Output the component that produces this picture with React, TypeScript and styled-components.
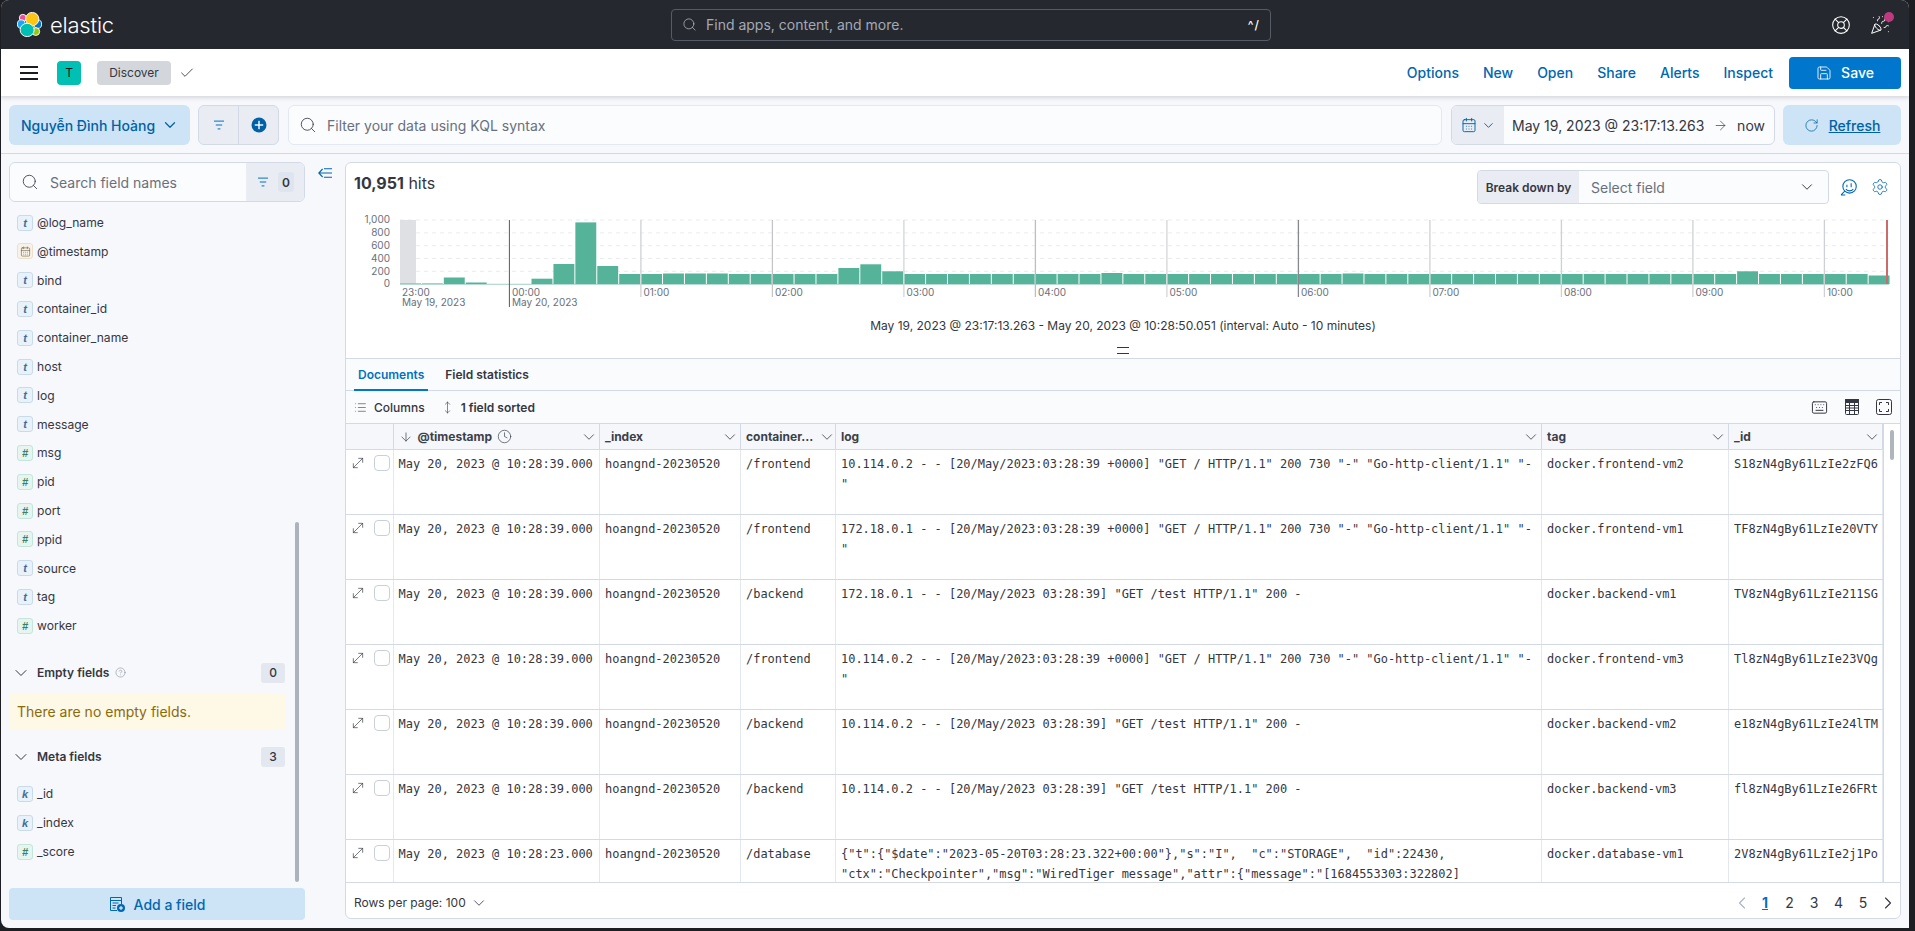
import React from "react";
import styled, { createGlobalStyle } from "styled-components";
import {
  ArrowDown, ArrowRight, CalendarDays, Check, ChevronDown, ChevronLeft, ChevronRight,
  CircleHelp, Clock, Keyboard, LifeBuoy, List, MoveDiagonal, MoveVertical, PartyPopper, RotateCw, Save, Search, Settings,
} from "lucide-react";

const Global = createGlobalStyle`
  html, body { margin: 0; padding: 0; background: #1d1e24; overflow: hidden; }
  body { font-family: Inter, "Noto Sans", sans-serif; font-size: 14px; color: #343741; }
  * { box-sizing: border-box; }
`;

const Page = styled.div`
  margin-left: 1px; width: 1908px; height: 928px; display: flex; flex-direction: column;
  background: #f7f8fc; border-radius: 8px 8px 0 8px; overflow: hidden;
`;
const TopBar = styled.header`
  height: 49px; flex: none; background: #25282f; display: flex; align-items: center;
`;
const Brand = styled.div`
  width: 670px; flex: none; display: flex; align-items: center; gap: 8px; padding-left: 16px;
`;
const BrandName = styled.span`
  color: #fff; font-size: 22px; font-weight: 300; letter-spacing: -0.2px; line-height: 30px;
`;
const GlobalSearch = styled.div`
  width: 600px; height: 32px; flex: none; display: flex; align-items: center; gap: 9px;
  padding: 0 10px; border: 1px solid #565b66; border-radius: 4px; color: #a3a9b5; font-size: 14px;
`;
const ShortcutKey = styled.span`
  margin-left: auto; color: #fff; font-size: 12px; font-weight: 500; letter-spacing: 1px;
`;
const TopIcons = styled.div`
  flex: 1; display: flex; justify-content: flex-end; align-items: center; gap: 19px; padding-right: 19px; color: #fff;
`;
const NewsIcon = styled.span`
  position: relative; display: flex;
`;
const NewsDot = styled.span`
  position: absolute; top: -3px; right: -4px; width: 10px; height: 10px; border-radius: 50%; background: #bd3a7e;
`;
const AppBar = styled.nav`
  height: 47px; flex: none; background: #fff; display: flex; align-items: center; padding: 0 8px 0 19px;
  box-shadow: 0 2px 4px rgba(60, 70, 90, 0.18); position: relative;
`;
const Burger = styled.svg`
  width: 18px; height: 14px; flex: none; margin-right: 19px;
`;
const Avatar = styled.span`
  width: 24px; height: 24px; border-radius: 4px; background: #00bfb3; color: #111; font-size: 12px;
  display: flex; align-items: center; justify-content: center; margin-right: 16px;
`;
const Crumb = styled.span`
  width: 74px; height: 24px; border-radius: 4px; background: #d3d6da; color: #343741; font-size: 12px;
  display: flex; align-items: center; justify-content: center; margin-right: 8px;
`;
const AppLinks = styled.div`
  margin-left: auto; display: flex; align-items: center; gap: 24px;
`;
const AppLink = styled.a`
  color: #0067b0; font-size: 14px; font-weight: 500;
`;
const SaveButton = styled.button`
  width: 112px; height: 32px; margin-left: -8px; border: 0; border-radius: 4px; background: #0077cc; color: #fff;
  font: 500 14px Inter, sans-serif; display: flex; align-items: center; justify-content: center; gap: 9px;
`;
const QueryBar = styled.div`
  height: 58px; flex: none; padding: 9px 8px 8px; display: flex; gap: 8px; border-bottom: 1px solid #d3dae6;
`;
const DataViewButton = styled.button`
  width: 181px; height: 40px; flex: none; border: 0; border-radius: 6px; background: #cce4f5; color: #0061a6;
  font: 500 14px Inter, sans-serif; display: flex; align-items: center; justify-content: space-between; padding: 0 11px 0 12px;
`;
const FilterGroup = styled.div`
  width: 81px; height: 40px; flex: none; display: flex; border: 1px solid #d3dae6; border-radius: 6px; background: #e9edf3; overflow: hidden;
`;
const FilterCell = styled.span`
  flex: 1; display: flex; align-items: center; justify-content: center;
  & + & { border-left: 1px solid #d3dae6; }
`;
const KqlInput = styled.div`
  flex: 1; height: 40px; margin: 0 1px; display: flex; align-items: center; gap: 10px; padding: 0 10px; background: #fbfcfd;
  border: 1px solid #e4e8f0; border-radius: 6px; color: #69707d; font-size: 14px;
`;
const DateGroup = styled.div`
  width: 324px; height: 40px; flex: none; display: flex; border: 1px solid #d3dae6; border-radius: 6px; background: #fbfcfd; overflow: hidden;
`;
const DatePrepend = styled.span`
  width: 52px; flex: none; background: #e9edf3; color: #0061a6; display: flex; align-items: center; justify-content: center; gap: 4px;
`;
const DateText = styled.span`
  flex: 1; display: flex; align-items: center; justify-content: space-between; padding: 0 9px 0 8px; font-size: 14px; color: #343741;
`;
const RefreshButton = styled.button`
  width: 118px; height: 40px; flex: none; border: 0; border-radius: 6px; background: #cce4f5; color: #0061a6;
  font: 500 14px Inter, sans-serif; display: flex; align-items: center; justify-content: center; gap: 10px;
`;
const RefreshLabel = styled.span`
  text-decoration: underline;
`;
const Content = styled.main`
  flex: 1; min-height: 0; display: flex; padding: 8px;
`;
const Sidebar = styled.aside`
  width: 296px; flex: none; display: flex; flex-direction: column; position: relative;
`;
const FieldSearch = styled.div`
  height: 40px; flex: none; display: flex; align-items: center; border: 1px solid #d3dae6; border-radius: 6px; background: #fbfcfd; overflow: hidden;
`;
const FieldSearchInput = styled.div`
  flex: 1; display: flex; align-items: center; gap: 11px; padding-left: 11px; color: #69707d; font-size: 14px;
`;
const FieldFilter = styled.div`
  width: 58px; height: 100%; background: #e9edf3; display: flex; align-items: center; gap: 9px; padding-left: 11px;
`;
const ZeroBadge = styled.span`
  width: 16px; height: 20px; border-radius: 3px; background: #dfe5ef; font-size: 12px; font-weight: 600; display: flex; align-items: center; justify-content: center;
`;
const FieldList = styled.ul<{ $top: number }>`
  list-style: none; margin: 0; padding: ${(p) => p.$top}px 0 0 8px; width: 276px;
`;
const FieldItem = styled.li`
  height: 28.8px; display: flex; align-items: center; gap: 4px; font-size: 12.1px; color: #343741;
`;
const tokenColors = {
  t: { bg: "#eaf2f9", border: "#c7dbec", color: "#3f6e97" },
  k: { bg: "#eaf2f9", border: "#c7dbec", color: "#3f6e97" },
  "#": { bg: "#e6f5f0", border: "#c3e6da", color: "#39806b" },
  d: { bg: "#f8f3ea", border: "#ebe0cc", color: "#6a5c3d" },
};
const Token = styled.span<{ $kind: keyof typeof tokenColors }>`
  width: 16px; height: 16px; flex: none; border-radius: 3px; display: flex; align-items: center; justify-content: center;
  background: ${(p) => tokenColors[p.$kind].bg}; border: 1px solid ${(p) => tokenColors[p.$kind].border};
  color: ${(p) => tokenColors[p.$kind].color}; font: italic 700 11px "Liberation Sans", sans-serif;
`;
const SectionHead = styled.div<{ $gap: number }>`
  height: 24px; margin-top: ${(p) => p.$gap}px; width: 276px; display: flex; align-items: center; padding-left: 2px; font-size: 12px; font-weight: 600; color: #343741;
`;
const SectionTitle = styled.span`
  margin-left: 6px; margin-right: 6px;
`;
const CountBadge = styled.span`
  margin-left: auto; width: 24px; height: 20px; border-radius: 3px; background: #e3e8f0; font-size: 12px; font-weight: 500;
  display: flex; align-items: center; justify-content: center;
`;
const Callout = styled.div`
  width: 276px; height: 36px; margin-top: 9px; padding: 0 8px; display: flex; align-items: center; background: #fef8e6; color: #8a6a0a; font-size: 14px;
`;
const AddField = styled.button`
  margin-top: auto; height: 32px; flex: none; border: 0; border-radius: 4px; background: #cce4f5; color: #0067b0;
  font: 500 14px Inter, sans-serif; display: flex; align-items: center; justify-content: center; gap: 9px;
`;
const SideScroll = styled.span`
  position: absolute; left: 286px; top: 360px; width: 4px; height: 360px; border-radius: 2px; background: #aeb3bb;
`;
const Gutter = styled.div`
  width: 40px; flex: none; padding: 6px 0 0 13px; line-height: 0;
`;
const Panel = styled.section`
  flex: 1; min-width: 0; display: flex; flex-direction: column; background: #fff; border: 1px solid #d3dae6; border-radius: 6px; overflow: hidden; margin-bottom: 1px;
`;
const HitsRow = styled.div`
  height: 47px; flex: none; display: flex; align-items: flex-start; padding: 7px 11px 0 8px;
`;
const Hits = styled.div`
  font-size: 16px; line-height: 24px; color: #343741; margin-top: 1px;
  & b { font-weight: 700; }
`;
const BreakDown = styled.div`
  margin-left: auto; width: 352px; height: 34px; display: flex; border: 1px solid #d3dae6; border-radius: 4px; overflow: hidden; background: #fbfcfd;
`;
const BreakLabel = styled.span`
  width: 101px; flex: none; background: #e9edf3; font-size: 12px; font-weight: 600; display: flex; align-items: center; justify-content: center;
`;
const BreakSelect = styled.span`
  flex: 1; display: flex; align-items: center; justify-content: space-between; padding: 0 12px 0 12px; color: #69707d; font-size: 14px;
`;
const ChartIcons = styled.div`
  display: flex; gap: 14px; align-items: center; height: 34px; margin-left: 11px; color: #0067b0;
`;
const ChartSvg = styled.svg`
  display: block; width: 1554px; height: 100px; flex: none;
`;
const RangeText = styled.div`
  margin-top: 8px; height: 16px; line-height: 16px; flex: none; text-align: center; font-size: 12px; color: #343741;
`;
const Handle = styled.div`
  height: 24px; flex: none; padding-top: 13px; display: flex; justify-content: center;
  &::before { content: ""; width: 12px; height: 5px; border-top: 1.5px solid #343741; border-bottom: 1.5px solid #343741; }
`;
const Tabs = styled.div`
  height: 33px; flex: none; display: flex; gap: 13px; padding-left: 8px; background: #fafbfd; border-top: 1px solid #d3dae6; border-bottom: 1px solid #d3dae6;
`;
const Tab = styled.span<{ $active?: boolean }>`
  padding: 1px 4px 0; height: 32px; display: flex; align-items: center; font-size: 12px; font-weight: 600;
  color: ${(p) => (p.$active ? "#0071c2" : "#343741")};
  border-bottom: 2px solid ${(p) => (p.$active ? "#0077cc" : "transparent")};
`;
const GridBar = styled.div`
  height: 32px; flex: none; display: flex; align-items: center; padding: 0 8px; background: #fafbfd; font-size: 12px; gap: 7px;
`;
const GridBarLabel = styled.span<{ $bold?: boolean }>`
  font-weight: ${(p) => (p.$bold ? 600 : 500)}; margin-right: 9px;
`;
const GridIcons = styled.div`
  margin-left: auto; display: flex; gap: 16px; align-items: center;
`;
const TableWrap = styled.div`
  flex: 1; min-height: 0; overflow: hidden; display: flex; flex-direction: column; position: relative; border-top: 1px solid #d3dae6;
`;
const COLS = "47.5px 206.5px 141px 95px 706px 187px 154px";
const HeadRow = styled.div`
  height: 26px; flex: none; display: grid; grid-template-columns: ${COLS}; width: 1537px; background: #f5f7fa; border-bottom: 1px solid #d3dae6;
`;
const HeadCell = styled.div`
  display: flex; align-items: center; gap: 5px; padding: 0 1px 0 5px; font-size: 12px; font-weight: 700; color: #3b3f49; border-right: 1px solid #d3dae6; min-width: 0;
  & > svg:last-child { margin-left: auto; flex: none; }
`;
const Row = styled.div`
  height: 65px; flex: none; display: grid; grid-template-columns: ${COLS}; width: 1537px; border-bottom: 1px solid #d3dae6;
`;
const Cell = styled.div<{ $wrap?: boolean }>`
  padding: 4px 0 0 5px; font: 11.96px/20px "DejaVu Sans Mono", "Liberation Mono", monospace; color: #343741;
  white-space: ${(p) => (p.$wrap ? "pre-wrap" : "nowrap")}; word-break: ${(p) => (p.$wrap ? "break-all" : "normal")};
  padding-right: ${(p) => (p.$wrap ? "5px" : "0")};
  border-right: 1px solid #e3e8f0; overflow: hidden;
`;
const ControlCell = styled.div`
  display: flex; align-items: flex-start; gap: 8px; padding: 5px 0 0 4px; border-right: 1px solid #e3e8f0;
`;
const Box = styled.span`
  width: 16px; height: 16px; flex: none; border: 1px solid #c9d0da; border-radius: 4px; background: #fff;
`;
const TableScroll = styled.span`
  position: absolute; left: 1544px; top: 6px; width: 4px; height: 30px; border-radius: 2px; background: #b0b5bd;
`;
const Gap = styled.div`
  position: absolute; left: 1537px; top: 0; bottom: 0; width: 1px; background: #d3dae6;
`;
const Pager = styled.div`
  height: 36px; flex: none; display: flex; align-items: center; padding: 4px 2px 0 8px; border-top: 1px solid #d3dae6; font-size: 12px;
`;
const PerPageCaret = styled.span`
  margin-left: 4px; display: flex;
`;
const PageNums = styled.div`
  margin-left: auto; display: flex; align-items: center; color: #343741; font-size: 14px;
`;
const PageNum = styled.span<{ $on?: boolean }>`
  width: 24.5px; text-align: center; font-weight: ${(p) => (p.$on ? 700 : 400)}; color: ${(p) => (p.$on ? "#0071c2" : "#343741")};
  text-decoration: ${(p) => (p.$on ? "underline" : "none")};
`;
const PageArrow = styled.span<{ $side: "prev" | "next" }>`
  display: flex; margin: ${(p) => (p.$side === "prev" ? "0 0.75px 0 0" : "0 0 0 2.75px")};
`;

const FilterIcon = () => (
  <svg width="12" height="12" viewBox="0 0 12 12" fill="#0071c2">
    <rect x="1" y="1.6" width="10" height="1" /><rect x="2.8" y="5.5" width="6.4" height="1" /><rect x="4.6" y="9.4" width="2.8" height="1" />
  </svg>
);
const PlusDisc = () => (
  <svg width="16" height="16" viewBox="0 0 16 16">
    <circle cx="8" cy="8" r="7.5" fill="#0061a6" />
    <rect x="7.3" y="3.8" width="1.4" height="8.4" fill="#fff" /><rect x="3.8" y="7.3" width="8.4" height="1.4" fill="#fff" />
  </svg>
);
const Logo = () => (
  <svg width="25" height="25" viewBox="0 0 32 32">
    <g stroke="#fff" strokeWidth="1.2">
      <ellipse cx="7.5" cy="7.5" rx="4.5" ry="4.5" fill="#f04e98" />
      <ellipse cx="5.5" cy="15.5" rx="5" ry="5.5" fill="#1ba9f5" />
      <ellipse cx="26.5" cy="15.5" rx="5" ry="5.5" fill="#0077cc" />
      <ellipse cx="24" cy="25" rx="5" ry="5" fill="#93c90e" />
      <ellipse cx="19.5" cy="9" rx="8.5" ry="8.5" fill="#fec514" />
      <ellipse cx="13" cy="23" rx="9" ry="8.5" fill="#00bfb3" />
    </g>
  </svg>
);
const InspectIcon = () => (
  <svg width="17" height="17" viewBox="0 0 16 16" fill="none" stroke="#0067b0" strokeWidth="1">
    <circle cx="9" cy="7" r="6.3" /><path d="M4.5 11.5 1 15M1 15h4M6.5 5.5v2.2M10.5 4v3.7M5.5 9.5c2 2.2 5 2.2 7 0" />
  </svg>
);
const TableIcon = () => (
  <svg width="16" height="16" viewBox="0 0 16 16" fill="none" stroke="#343741" strokeWidth="1">
    <rect x="1.5" y="0.5" width="13" height="15" rx="1" /><rect x="1.5" y="0.5" width="13" height="3" fill="#343741" />
    <path d="M1.5 6.5h13M1.5 9h13M1.5 11.5h13M5.5 3.5v12M10.5 3.5v12" />
  </svg>
);
const FullIcon = () => (
  <svg width="16" height="16" viewBox="0 0 16 16" fill="none" stroke="#343741" strokeWidth="1">
    <rect x="0.5" y="0.5" width="15" height="15" rx="2" /><path d="M3.5 6V3.5H6M10 3.5h2.5V6M12.5 10v2.5H10M6 12.5H3.5V10" />
  </svg>
);
const AddIcon = () => (
  <svg width="16" height="16" viewBox="0 0 16 16" fill="none" stroke="#0067b0" strokeWidth="1">
    <path d="M8 14.5H1.5v-13h11V8M1.5 4.5h11M3.5 7h6M3.5 9.5h3.5M3.5 12h3" />
    <circle cx="12" cy="12" r="4" fill="#0067b0" stroke="none" /><path d="M12 10v4M10 12h4" stroke="#fff" />
  </svg>
);
const CollapseIcon = () => (
  <svg width="15" height="10" viewBox="0 0 15 10" fill="none" stroke="#0067b0" strokeWidth="1.1">
    <path d="M14 .8H6M14 5H.8M14 9.2H6M4.6 1 .8 5l3.8 4" />
  </svg>
);

const fields: [keyof typeof tokenColors, string][] = [
  ["t", "@log_name"], ["d", "@timestamp"], ["t", "bind"], ["t", "container_id"], ["t", "container_name"], ["t", "host"], ["t", "log"],
  ["t", "message"], ["#", "msg"], ["#", "pid"], ["#", "port"], ["#", "ppid"], ["t", "source"], ["t", "tag"], ["#", "worker"],
];
const metaFields: [keyof typeof tokenColors, string][] = [["k", "_id"], ["k", "_index"], ["#", "_score"]];

const FieldRow = ({ kind, name }: { kind: keyof typeof tokenColors; name: string }) => (
  <FieldItem>
    <Token $kind={kind}>{kind === "d" ? <CalendarDays size={11} strokeWidth={1.3} /> : kind}</Token>
    <span>{name}</span>
  </FieldItem>
);

const G1 = '"GET / HTTP/1.1" 200 730 "-" "Go-http-client/1.1" "-"';
const rows = [
  ["May 20, 2023 @ 10:28:39.000", "/frontend", `10.114.0.2 - - [20/May/2023:03:28:39 +0000] ${G1}`, "docker.frontend-vm2", "S18zN4gBy61LzIe2zFQ6"],
  ["May 20, 2023 @ 10:28:39.000", "/frontend", `172.18.0.1 - - [20/May/2023:03:28:39 +0000] ${G1}`, "docker.frontend-vm1", "TF8zN4gBy61LzIe20VTY"],
  ["May 20, 2023 @ 10:28:39.000", "/backend", '172.18.0.1 - - [20/May/2023 03:28:39] "GET /test HTTP/1.1" 200 -', "docker.backend-vm1", "TV8zN4gBy61LzIe211SG"],
  ["May 20, 2023 @ 10:28:39.000", "/frontend", `10.114.0.2 - - [20/May/2023:03:28:39 +0000] ${G1}`, "docker.frontend-vm3", "Tl8zN4gBy61LzIe23VQg"],
  ["May 20, 2023 @ 10:28:39.000", "/backend", '10.114.0.2 - - [20/May/2023 03:28:39] "GET /test HTTP/1.1" 200 -', "docker.backend-vm2", "e18zN4gBy61LzIe24lTM"],
  ["May 20, 2023 @ 10:28:39.000", "/backend", '10.114.0.2 - - [20/May/2023 03:28:39] "GET /test HTTP/1.1" 200 -', "docker.backend-vm3", "fl8zN4gBy61LzIe26FRt"],
  ["May 20, 2023 @ 10:28:23.000", "/database", '{"t":{"$date":"2023-05-20T03:28:23.322+00:00"},"s":"I",  "c":"STORAGE",  "id":22430,\n"ctx":"Checkpointer","msg":"WiredTiger message","attr":{"message":"[1684553303:322802]', "docker.database-vm1", "2V8zN4gBy61LzIe2j1Po"],
];

const special: Record<number, number> = {
  0: 1, 1: 1, 2: 6.5, 3: 1.5, 4: 0, 5: 0, 6: 5.3, 7: 20, 8: 61.6, 9: 18, 12: 10.5, 13: 10.5, 14: 10.5, 20: 16, 21: 19.7, 22: 12.7,
  32: 11, 43: 10.5, 61: 12.7, 67: 8.5,
};
const bars = Array.from({ length: 68 }, (_, i) => special[i] ?? 10);
const yTicks: [string, number, number][] = [["1,000", 222.5, 220], ["800", 235.5, 232.9], ["600", 248.5, 245.7], ["400", 261.5, 258.5], ["200", 274.5, 271.3], ["0", 286.5, 0]];
const hourTone = ["#555a63", "#cfd0d3", "#c4c5c8", "#d4d5d7", "#bdbec1", "#d4d5d7", "#85888d", "#cfd0d3", "#cfd0d3", "#cfd0d3", "#cfd0d3"];
const hourLabel = ["00:00", "01:00", "02:00", "03:00", "04:00", "05:00", "06:00", "07:00", "08:00", "09:00", "10:00"];

const Chart = () => (
  <ChartSvg viewBox="346 210 1554 100" fontFamily="Inter, sans-serif" fontSize="10" fill="#69707d">
    {yTicks.map(([label, y, gridY]) => (
      <g key={label}>
        <text x="390" y={y} textAnchor="end">{label}</text>
        {gridY > 0 && <line x1="400" x2="1889" y1={gridY} y2={gridY} stroke="#e9ebf1" strokeDasharray="4 4" />}
      </g>
    ))}
    <rect x="400" y="220" width="16" height="64" fill="#dfe0e4" />
    <line x1="400" x2="1889" y1="284" y2="284" stroke="#dfe5ea" />
    {bars.map((h, i) => (
      <rect key={i} x={400 + i * 21.92} y={284 - h} width="20.9" height={h} fill="#54b399" opacity={i < 2 ? 0.5 : 1} />
    ))}
    <line x1="400" x2="1889" y1="284.5" y2="284.5" stroke="#54b399" strokeOpacity="0.35" />
    {hourLabel.map((l, i) => {
      const x = 509.4 + i * 131.5;
      return (
        <g key={l}>
          <line x1={x} x2={x} y1="220" y2={i === 0 ? 307 : 297} stroke={hourTone[i]} strokeWidth={i === 0 ? 1 : 1.3} />
          <text x={x + 2.5} y="296">{l}</text>
        </g>
      );
    })}
    <text x="402" y="296">23:00</text>
    <text x="402" y="306">May 19, 2023</text>
    <text x="512" y="306">May 20, 2023</text>
    <line x1="1887" x2="1887" y1="220" y2="284" stroke="#cc6b6b" strokeWidth="2" />
  </ChartSvg>
);

const HeadCaret = () => <ChevronDown size={18} strokeWidth={1.1} />;

export default function App() {
  return (
    <>
      <Global />
      <Page>
        <TopBar>
          <Brand><Logo /><BrandName>elastic</BrandName></Brand>
          <GlobalSearch>
            <Search size={15} strokeWidth={1.1} color="#c4c8d0" />
            <span>Find apps, content, and more.</span>
            <ShortcutKey>^/</ShortcutKey>
          </GlobalSearch>
          <TopIcons>
            <LifeBuoy size={20} strokeWidth={1.3} />
            <NewsIcon><PartyPopper size={20} strokeWidth={1.2} /><NewsDot /></NewsIcon>
          </TopIcons>
        </TopBar>
        <AppBar>
          <Burger viewBox="0 0 18 14" fill="#1a1c21"><rect width="18" height="2" /><rect y="6" width="18" height="2" /><rect y="12" width="18" height="2" /></Burger>
          <Avatar>T</Avatar>
          <Crumb>Discover</Crumb>
          <Check size={16} strokeWidth={1.3} color="#343741" />
          <AppLinks>
            <AppLink>Options</AppLink><AppLink>New</AppLink><AppLink>Open</AppLink><AppLink>Share</AppLink><AppLink>Alerts</AppLink><AppLink>Inspect</AppLink>
            <SaveButton><Save size={16} strokeWidth={1.3} />Save</SaveButton>
          </AppLinks>
        </AppBar>
        <QueryBar>
          <DataViewButton>Nguyễn Đình Hoàng<ChevronDown size={18} strokeWidth={1.6} /></DataViewButton>
          <FilterGroup><FilterCell><FilterIcon /></FilterCell><FilterCell><PlusDisc /></FilterCell></FilterGroup>
          <KqlInput><Search size={18} strokeWidth={1.1} color="#343741" />Filter your data using KQL syntax</KqlInput>
          <DateGroup>
            <DatePrepend><CalendarDays size={16} strokeWidth={1.4} /><ChevronDown size={15} strokeWidth={1.5} /></DatePrepend>
            <DateText><span>May 19, 2023 @ 23:17:13.263</span><ArrowRight size={15} strokeWidth={1.1} /><span>now</span></DateText>
          </DateGroup>
          <RefreshButton><RotateCw size={15} strokeWidth={1.2} /><RefreshLabel>Refresh</RefreshLabel></RefreshButton>
        </QueryBar>
        <Content>
          <Sidebar>
            <FieldSearch>
              <FieldSearchInput><Search size={18} strokeWidth={1.1} color="#343741" />Search field names</FieldSearchInput>
              <FieldFilter><FilterIcon /><ZeroBadge>0</ZeroBadge></FieldFilter>
            </FieldSearch>
            <FieldList $top={6.2}>{fields.map(([k, n]) => <FieldRow key={n} kind={k} name={n} />)}</FieldList>
            <SectionHead $gap={20.8}>
              <ChevronDown size={20} strokeWidth={1.2} /><SectionTitle>Empty fields</SectionTitle>
              <CircleHelp size={11} strokeWidth={1} color="#69707d" /><CountBadge>0</CountBadge>
            </SectionHead>
            <Callout>There are no empty fields.</Callout>
            <SectionHead $gap={15}><ChevronDown size={20} strokeWidth={1.2} /><SectionTitle>Meta fields</SectionTitle><CountBadge>3</CountBadge></SectionHead>
            <FieldList $top={10.6}>{metaFields.map(([k, n]) => <FieldRow key={n} kind={k} name={n} />)}</FieldList>
            <AddField><AddIcon />Add a field</AddField>
            <SideScroll />
          </Sidebar>
          <Gutter><CollapseIcon /></Gutter>
          <Panel>
            <HitsRow>
              <Hits><b>10,951</b> hits</Hits>
              <BreakDown><BreakLabel>Break down by</BreakLabel><BreakSelect>Select field<ChevronDown size={18} strokeWidth={1.3} color="#343741" /></BreakSelect></BreakDown>
              <ChartIcons><InspectIcon /><Settings size={18} strokeWidth={1.1} /></ChartIcons>
            </HitsRow>
            <Chart />
            <RangeText>May 19, 2023 @ 23:17:13.263 - May 20, 2023 @ 10:28:50.051 (interval: Auto - 10 minutes)</RangeText>
            <Handle />
            <Tabs><Tab $active>Documents</Tab><Tab>Field statistics</Tab></Tabs>
            <GridBar>
              <List size={13} strokeWidth={1.1} /><GridBarLabel>Columns</GridBarLabel>
              <MoveVertical size={13} strokeWidth={1.1} /><GridBarLabel $bold>1 field sorted</GridBarLabel>
              <GridIcons><Keyboard size={17} strokeWidth={1.4} /><TableIcon /><FullIcon /></GridIcons>
            </GridBar>
            <TableWrap>
              <HeadRow>
                <HeadCell />
                <HeadCell><ArrowDown size={14} strokeWidth={1.2} />@timestamp <Clock size={15} strokeWidth={1.1} /><HeadCaret /></HeadCell>
                <HeadCell>_index<HeadCaret /></HeadCell>
                <HeadCell>container...<HeadCaret /></HeadCell>
                <HeadCell>log<HeadCaret /></HeadCell>
                <HeadCell>tag<HeadCaret /></HeadCell>
                <HeadCell>_id<HeadCaret /></HeadCell>
              </HeadRow>
              {rows.map((r) => (
                <Row key={r[4]}>
                  <ControlCell><MoveDiagonal size={16} strokeWidth={1} color="#343741" /><Box /></ControlCell>
                  <Cell>{r[0]}</Cell><Cell>hoangnd-20230520</Cell><Cell>{r[1]}</Cell><Cell $wrap>{r[2]}</Cell><Cell>{r[3]}</Cell><Cell>{r[4]}</Cell>
                </Row>
              ))}
              <Gap />
              <TableScroll />
            </TableWrap>
            <Pager>
              <span>Rows per page: 100</span>
              <PerPageCaret><ChevronDown size={18} strokeWidth={1.1} /></PerPageCaret>
              <PageNums>
                <PageArrow $side="prev"><ChevronLeft size={20} strokeWidth={1.3} color="#a9b4c4" /></PageArrow>
                <PageNum $on>1</PageNum><PageNum>2</PageNum><PageNum>3</PageNum><PageNum>4</PageNum><PageNum>5</PageNum>
                <PageArrow $side="next"><ChevronRight size={20} strokeWidth={1.3} color="#343741" /></PageArrow>
              </PageNums>
            </Pager>
          </Panel>
        </Content>
      </Page>
    </>
  );
}
